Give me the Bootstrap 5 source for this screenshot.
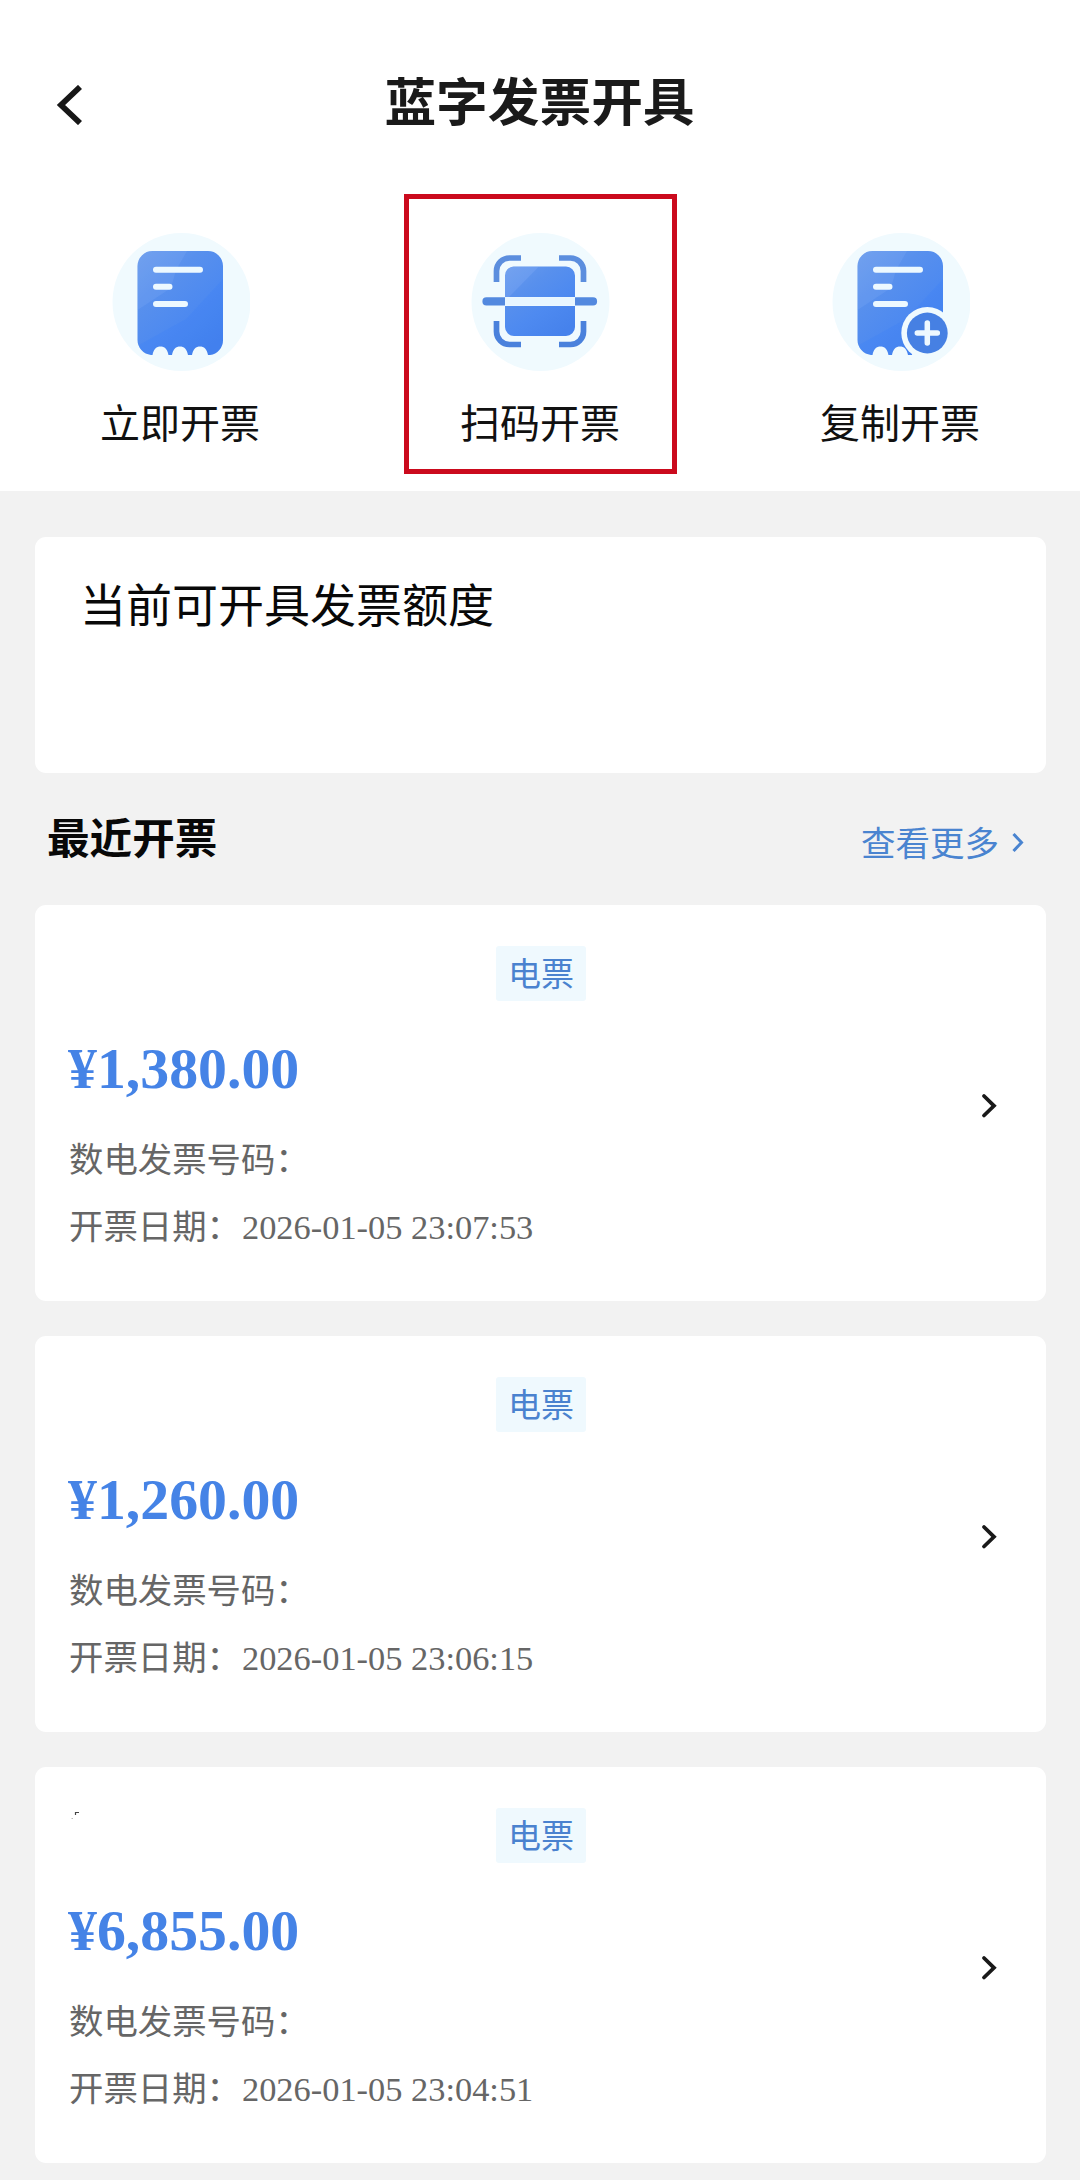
<!DOCTYPE html>
<html lang="zh-CN">
<head>
<meta charset="utf-8">
<meta name="viewport" content="width=device-width, initial-scale=1">
<title>蓝字发票开具</title>
<link href="https://cdn.jsdelivr.net/npm/bootstrap@5.3.0/dist/css/bootstrap.min.css" rel="stylesheet">
<style>
  body { background: #f2f2f2; font-family: "Noto Sans CJK SC", sans-serif; color: #111; }
  .top-panel { height: 491px; }
  .title-bar { padding: 62px 57px 0 56px; height: 194px; }
  .title-row { height: 74px; }
  .back-link { width: 28px; margin-top: 11px; }
  .page-title { font-size: 51.7px; line-height: 60px; font-weight: 700; color: #1a1a1a; }
  .entry { width: 273px; height: 280px; border: 5px solid transparent; padding-top: 33px; }
  .entry.chosen { border-color: #cb0a1d; }
  .entry-label { font-size: 40px; line-height: 48px; margin-top: 25px; color: #111; }
  .panel-card { border: 0; border-radius: 11px; margin: 0 34px 0 35px; background: #fff; }
  .quota { height: 236px; margin-top: 46px; padding: 35px 45px; font-size: 46px; line-height: 60px; color: #080808; }
  .recent-head { height: 124px; margin: 0 56px 8px 47px; }
  .recent-title { font-size: 42.6px; line-height: 60px; font-weight: 700; color: #080808; padding-top: 1px; }
  .more-link { font-size: 34.5px; line-height: 46px; color: #4a84d0; margin-top: 12px; }
  .more-link svg { margin: 2px 0 0 13px; }
  .invoice { height: 396px; margin-bottom: 35px; padding: 41px 49px 0 34px; }
  .kind { width: 90px; height: 55px; border-radius: 3px; background: #eff9fe; color: #4a82cf; font-size: 33px; line-height: 52px; margin-left: 16px; }
  .amount { font: 700 57.8px/60px "Liberation Serif", serif; color: #4583e6; margin: 38px 0 25px -1px; }
  .detail { font-size: 34.4px; line-height: 67px; color: #666; }
  .stamp { font-family: "Liberation Serif", serif; margin-left: 1px; }
  .go { margin-top: 92px; }
  .speck { left: 36px; top: 43px; }
</style>
</head>
<body>
<svg width="0" height="0" class="position-absolute">
  <defs>
    <linearGradient id="blue" x1="0" y1="0" x2=".75" y2="1">
      <stop offset="0" stop-color="#6b9cec"/><stop offset=".35" stop-color="#5890ed"/><stop offset=".65" stop-color="#4e8af0"/><stop offset="1" stop-color="#4682ec"/>
    </linearGradient>
    <g id="receipt">
      <circle cx="71.5" cy="70" r="69" fill="#f0fafe"/>
      <path fill="url(#blue)" d="M42.500 19H98a15 15 0 0 1 15 15V108a15 15 0 0 1-13 15H98C97 117 94 114.500 90 114.500S83 117 82 123H78C77 117 74 114.500 70 114.500S63 117 62 123H58.500C57.500 117 54.500 114.500 50.500 114.500S43.500 117 42.500 123H41a15 15 0 0 1-13.500-15V34a15 15 0 0 1 15-15z"/>
      <path fill="#8eb5f7" opacity=".18" d="M42.500 19H77L66 38L61 56L27.500 78V34a15 15 0 0 1 15-15z"/>
      <path fill="#2877ff" opacity=".14" d="M113 47V108a15 15 0 0 1-13 15H98C97 117 94 114.500 90 114.500S83 117 82 123H78C77 117 74 114.500 70 114.500S63 117 62 123H58.500C57.500 117 54.500 114.500 50.500 114.500S43.500 117 42.500 123H41a15 15 0 0 1-12-10L76 87Z"/>
      <path fill="none" stroke="#edf9ff" stroke-width="6" stroke-linecap="round" d="M46 37.700H90M46 54.800H59.500M46 72H75"/>
    </g>
  </defs>
</svg>

<header class="top-panel bg-white">
  <div class="title-bar">
    <div class="title-row d-flex align-items-center justify-content-between">
      <a href="#" class="back-link d-flex" aria-label="返回"><svg width="28" height="40" viewBox="0 0 28 40"><path d="M24 2L5 20L24 38" fill="none" stroke="#171717" stroke-width="5.800"/></svg></a>
      <h1 class="page-title m-0">蓝字发票开具</h1>
      <span class="back-link"></span>
    </div>
  </div>
  <nav class="row g-0 text-center">
    <div class="col-4 d-flex justify-content-center">
      <div class="entry">
        <svg class="d-block mx-auto" width="140" height="140" viewBox="0 0 140 140"><use href="#receipt"/></svg>
        <div class="entry-label">立即开票</div>
      </div>
    </div>
    <div class="col-4 d-flex justify-content-center">
      <div class="entry chosen">
        <svg class="d-block mx-auto" width="140" height="140" viewBox="0 0 140 140">
          <circle cx="70.500" cy="70" r="69" fill="#f0fafe"/>
          <path fill="url(#blue)" d="M43.500 34.500H96A9 9 0 0 1 105 43.500V65H35V43.500A9 9 0 0 1 43.500 34.500zM35 74H105V95A9 9 0 0 1 96 104H44A9 9 0 0 1 35 95z"/>
          <path fill="#9abfff" opacity=".2" d="M44 34.500H69L39 65H35V43.500A9 9 0 0 1 44 34.500z"/>
          <path d="M35 65.300H105V73.500H35z" fill="#e8f6ff"/>
          <path d="M16.500 65.300H35V73.500H16.500a4.100 4.100 0 0 1 0-8.200zM105 65.300H123a4.100 4.100 0 0 1 0 8.200H105z" fill="#5389df"/>
          <g fill="none" stroke-width="5.700"><path stroke="#5c8ede" d="M51 26H39.500A13 13 0 0 0 26.500 39V50M89 26H100.500A13 13 0 0 1 113.500 39V50"/><path stroke="#4a81dc" d="M26.500 89V99.500A13 13 0 0 0 39.500 112.500H51M113.500 89V99.500A13 13 0 0 1 100.500 112.500H89"/></g>
        </svg>
        <div class="entry-label">扫码开票</div>
      </div>
    </div>
    <div class="col-4 d-flex justify-content-center">
      <div class="entry">
        <svg class="d-block mx-auto" width="140" height="140" viewBox="0 0 140 140">
          <use href="#receipt"/>
          <circle cx="97.300" cy="101" r="26" fill="#f0fafe"/><circle cx="97.300" cy="101" r="20.400" fill="#4680e3"/>
          <path d="M97.300 91V111M87.300 101H107.300" stroke="#edf8ff" stroke-width="5.500" stroke-linecap="round"/>
        </svg>
        <div class="entry-label">复制开票</div>
      </div>
    </div>
  </nav>
</header>

<main>
  <section class="card panel-card quota">当前可开具发票额度</section>

  <div class="recent-head d-flex align-items-center justify-content-between">
    <h2 class="recent-title m-0">最近开票</h2>
    <a href="#" class="more-link d-flex align-items-center text-decoration-none">查看更多<svg width="12" height="22" viewBox="0 0 12 22"><path d="M1.500 3L9.500 11.500L1.500 20" fill="none" stroke="#4a84d0" stroke-width="3"/></svg></a>
  </div>

  <article class="card panel-card invoice">
    <div class="kind align-self-center text-center">电票</div>
    <div class="d-flex justify-content-between align-items-start">
      <div>
        <div class="amount">¥1,380.00</div>
        <div class="detail">数电发票号码：</div>
        <div class="detail">开票日期：<span class="stamp">2026-01-05 23:07:53</span></div>
      </div>
      <svg class="go" width="16" height="26" viewBox="0 0 16 26"><path d="M3 3L13 12.800L3 22.500" fill="none" stroke="#191919" stroke-width="3.800" stroke-linecap="round"/></svg>
    </div>
  </article>

  <article class="card panel-card invoice">
    <div class="kind align-self-center text-center">电票</div>
    <div class="d-flex justify-content-between align-items-start">
      <div>
        <div class="amount">¥1,260.00</div>
        <div class="detail">数电发票号码：</div>
        <div class="detail">开票日期：<span class="stamp">2026-01-05 23:06:15</span></div>
      </div>
      <svg class="go" width="16" height="26" viewBox="0 0 16 26"><path d="M3 3L13 12.800L3 22.500" fill="none" stroke="#191919" stroke-width="3.800" stroke-linecap="round"/></svg>
    </div>
  </article>

  <article class="card panel-card invoice mb-0 position-relative">
    <svg class="speck position-absolute" width="10" height="12" viewBox="0 0 10 12"><path d="M4.500 5V2.500H8" fill="none" stroke="#444" stroke-width="1.200"/><path d="M.5 8.500H2" stroke="#bbb"/></svg>
    <div class="kind align-self-center text-center">电票</div>
    <div class="d-flex justify-content-between align-items-start">
      <div>
        <div class="amount">¥6,855.00</div>
        <div class="detail">数电发票号码：</div>
        <div class="detail">开票日期：<span class="stamp">2026-01-05 23:04:51</span></div>
      </div>
      <svg class="go" width="16" height="26" viewBox="0 0 16 26"><path d="M3 3L13 12.800L3 22.500" fill="none" stroke="#191919" stroke-width="3.800" stroke-linecap="round"/></svg>
    </div>
  </article>
</main>
<script src="https://cdn.jsdelivr.net/npm/bootstrap@5.3.0/dist/js/bootstrap.bundle.min.js"></script>
</body>
</html>
